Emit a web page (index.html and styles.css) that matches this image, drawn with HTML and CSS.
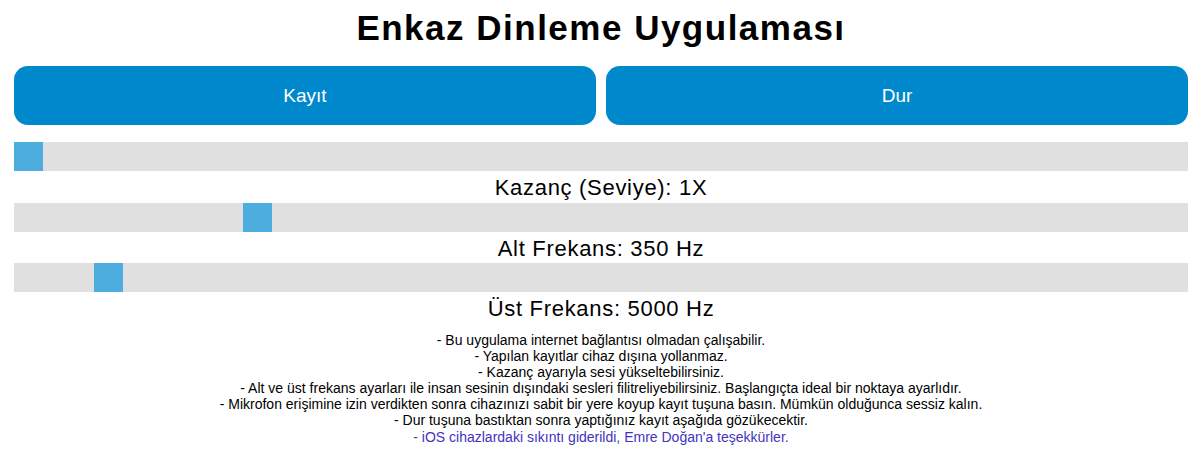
FILE: index.html
```html
<!DOCTYPE html>
<html lang="tr">
<head>
<meta charset="utf-8">
<title>Enkaz Dinleme Uygulaması</title>
<link rel="stylesheet" href="styles.css">
</head>
<body>
<div class="page">
  <h1 class="title">Enkaz Dinleme Uygulaması</h1>
  <div class="buttons">
    <button class="btn">Kayıt</button>
    <button class="btn">Dur</button>
  </div>
  <div class="slider"><div class="thumb" style="margin-left:0px"></div></div>
  <div class="label">Kazanç (Seviye): 1X</div>
  <div class="slider"><div class="thumb" style="margin-left:229px"></div></div>
  <div class="label">Alt Frekans: 350 Hz</div>
  <div class="slider"><div class="thumb" style="margin-left:80px"></div></div>
  <div class="label">Üst Frekans: 5000 Hz</div>
  <div class="notes">
    <div>- Bu uygulama internet bağlantısı olmadan çalışabilir.</div>
    <div>- Yapılan kayıtlar cihaz dışına yollanmaz.</div>
    <div>- Kazanç ayarıyla sesi yükseltebilirsiniz.</div>
    <div>- Alt ve üst frekans ayarları ile insan sesinin dışındaki sesleri filitreliyebilirsiniz. Başlangıçta ideal bir noktaya ayarlıdır.</div>
    <div>- Mikrofon erişimine izin verdikten sonra cihazınızı sabit bir yere koyup kayıt tuşuna basın. Mümkün olduğunca sessiz kalın.</div>
    <div>- Dur tuşuna bastıktan sonra yaptığınız kayıt aşağıda gözükecektir.</div>
    <div class="credit">- iOS cihazlardaki sıkıntı giderildi, Emre Doğan'a teşekkürler.</div>
  </div>
</div>
</body>
</html>
```

FILE: styles.css
```css
html, body {
  margin: 0;
  padding: 0;
  background: #ffffff;
}
body {
  font-family: "Liberation Sans", Arial, sans-serif;
  color: #000;
}
.page {
  padding: 0 12px 0 14px;
}
.title {
  margin: 0;
  height: 56px;
  line-height: 56px;
  font-size: 35px;
  letter-spacing: 1.5px;
  font-weight: bold;
  text-align: center;
}
.buttons {
  display: flex;
  gap: 10px;
  margin-top: 10px;
}
.btn {
  flex: 1;
  height: 59px;
  border: none;
  border-radius: 14px;
  background: #0088cc;
  color: #ffffff;
  font-family: "Liberation Sans", Arial, sans-serif;
  font-size: 19px;
  padding: 0;
}
.slider {
  display: flex;
  height: 29px;
  background: #e0e0e0;
  margin-top: 17px;
}
.label + .slider {
  margin-top: 0;
}
.thumb {
  width: 29px;
  height: 29px;
  background: #4eaddf;
}
.label {
  height: 31.5px;
  line-height: 34px;
  font-size: 22px;
  letter-spacing: 0.7px;
  text-align: center;
}
.notes {
  margin-top: 8px;
  font-size: 14px;
  line-height: 16.17px;
  text-align: center;
}
.credit {
  color: #3f33c0;
}
```
